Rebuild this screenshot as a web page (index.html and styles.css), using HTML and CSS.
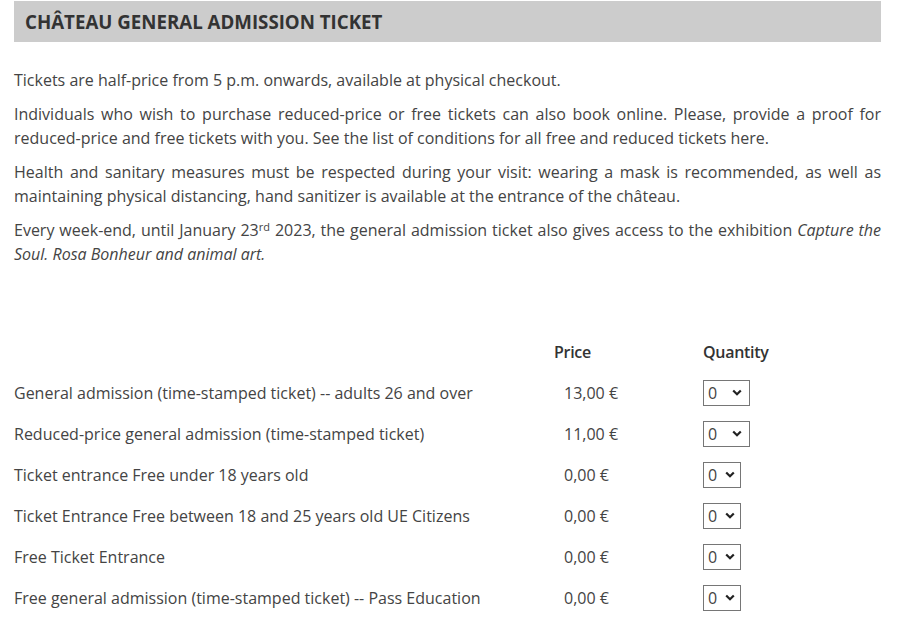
FILE: index.html
```html
<!DOCTYPE html>
<html lang="en">
<head>
<meta charset="utf-8">
<title>Château general admission ticket</title>
<link rel="stylesheet" href="styles.css">
</head>
<body>
<div class="page">
  <h2 class="title">Château general admission ticket</h2>
  <div class="intro">
    <p>Tickets are half-price from 5 p.m. onwards, available at physical checkout.</p>
    <p>Individuals who wish to purchase reduced-price or free tickets can also book online. Please, provide a proof for reduced-price and free tickets with you. See the list of conditions for all free and reduced tickets <a href="#">here</a>.</p>
    <p>Health and sanitary measures must be respected during your visit: wearing a mask is recommended, as well as maintaining physical distancing, hand sanitizer is available at the entrance of the château.</p>
    <p>Every week-end, until January 23<sup>rd</sup> 2023, the general admission ticket also gives access to the exhibition <em>Capture the Soul. Rosa Bonheur and animal art.</em></p>
  </div>
  <div class="tickets">
    <div class="row head">
      <div class="label"></div>
      <div class="price-h">Price</div>
      <div class="qty-h">Quantity</div>
    </div>
    <div class="row">
      <div class="label">General admission (time-stamped ticket) -- adults 26 and over</div>
      <div class="price">13,00 €</div>
      <div class="qty"><select class="sel wide"><option>0</option><option>1</option><option>2</option><option>10</option></select></div>
    </div>
    <div class="row">
      <div class="label">Reduced-price general admission (time-stamped ticket)</div>
      <div class="price">11,00 €</div>
      <div class="qty"><select class="sel wide"><option>0</option><option>1</option><option>2</option><option>10</option></select></div>
    </div>
    <div class="row">
      <div class="label">Ticket entrance Free under 18 years old</div>
      <div class="price">0,00 €</div>
      <div class="qty"><select class="sel"><option>0</option><option>1</option><option>2</option></select></div>
    </div>
    <div class="row">
      <div class="label">Ticket Entrance Free between 18 and 25 years old UE Citizens</div>
      <div class="price">0,00 €</div>
      <div class="qty"><select class="sel"><option>0</option><option>1</option><option>2</option></select></div>
    </div>
    <div class="row">
      <div class="label">Free Ticket Entrance</div>
      <div class="price">0,00 €</div>
      <div class="qty"><select class="sel"><option>0</option><option>1</option><option>2</option></select></div>
    </div>
    <div class="row">
      <div class="label">Free general admission (time-stamped ticket) -- Pass Education</div>
      <div class="price">0,00 €</div>
      <div class="qty"><select class="sel"><option>0</option><option>1</option><option>2</option></select></div>
    </div>
  </div>
</div>
</body>
</html>
```
FILE: styles.css
```css
html, body {
  margin: 0;
  padding: 0;
  background: #fff;
}
body {
  font-family: "Open Sans", "DejaVu Sans", sans-serif;
  font-size: 16px;
  line-height: 24px;
  color: #444;
}
.page {
  margin: 1px 0 0 14px;
  width: 867px;
}
.title {
  margin: 0;
  height: 41px;
  background: #ccc;
  padding: 0 11px;
  font-size: 18.7px;
  font-weight: 700;
  line-height: 41px;
  text-transform: uppercase;
  color: #333;
}
.intro {
  margin-top: 26px;
}
.intro p {
  margin: 0 0 10px;
  text-align: justify;
}
.intro a {
  color: #444;
  text-decoration: none;
}
.intro sup {
  font-size: 11px;
  line-height: 11px;
  vertical-align: 5px;
}
.tickets {
  margin-top: 66px;
}
.row {
  display: grid;
  grid-template-columns: 540px 149px 1fr;
  align-items: center;
  height: 41px;
}
.row.head {
  height: 40px;
}
.price-h, .qty-h {
  font-weight: 600;
  color: #333;
  letter-spacing: -0.3px;
}
.price {
  padding-left: 10px;
}
.sel {
  -webkit-appearance: none;
  appearance: none;
  box-sizing: border-box;
  height: 26px;
  width: 38px;
  border: 1px solid #767676;
  border-radius: 0;
  background-color: #fff;
  background-image: url("data:image/svg+xml,%3Csvg xmlns='http://www.w3.org/2000/svg' width='10' height='7' viewBox='0 0 10 7'%3E%3Cpath d='M1.2 1.5l3.8 3.8 3.8-3.8' fill='none' stroke='%23222' stroke-width='2.2'/%3E%3C/svg%3E");
  background-repeat: no-repeat;
  background-position: right 5px center;
  padding: 0 0 0 4px;
  font-family: "Open Sans", "DejaVu Sans", sans-serif;
  font-size: 16px;
  color: #444;
}
.sel.wide {
  width: 47px;
  background-position: right 7px center;
}
```
